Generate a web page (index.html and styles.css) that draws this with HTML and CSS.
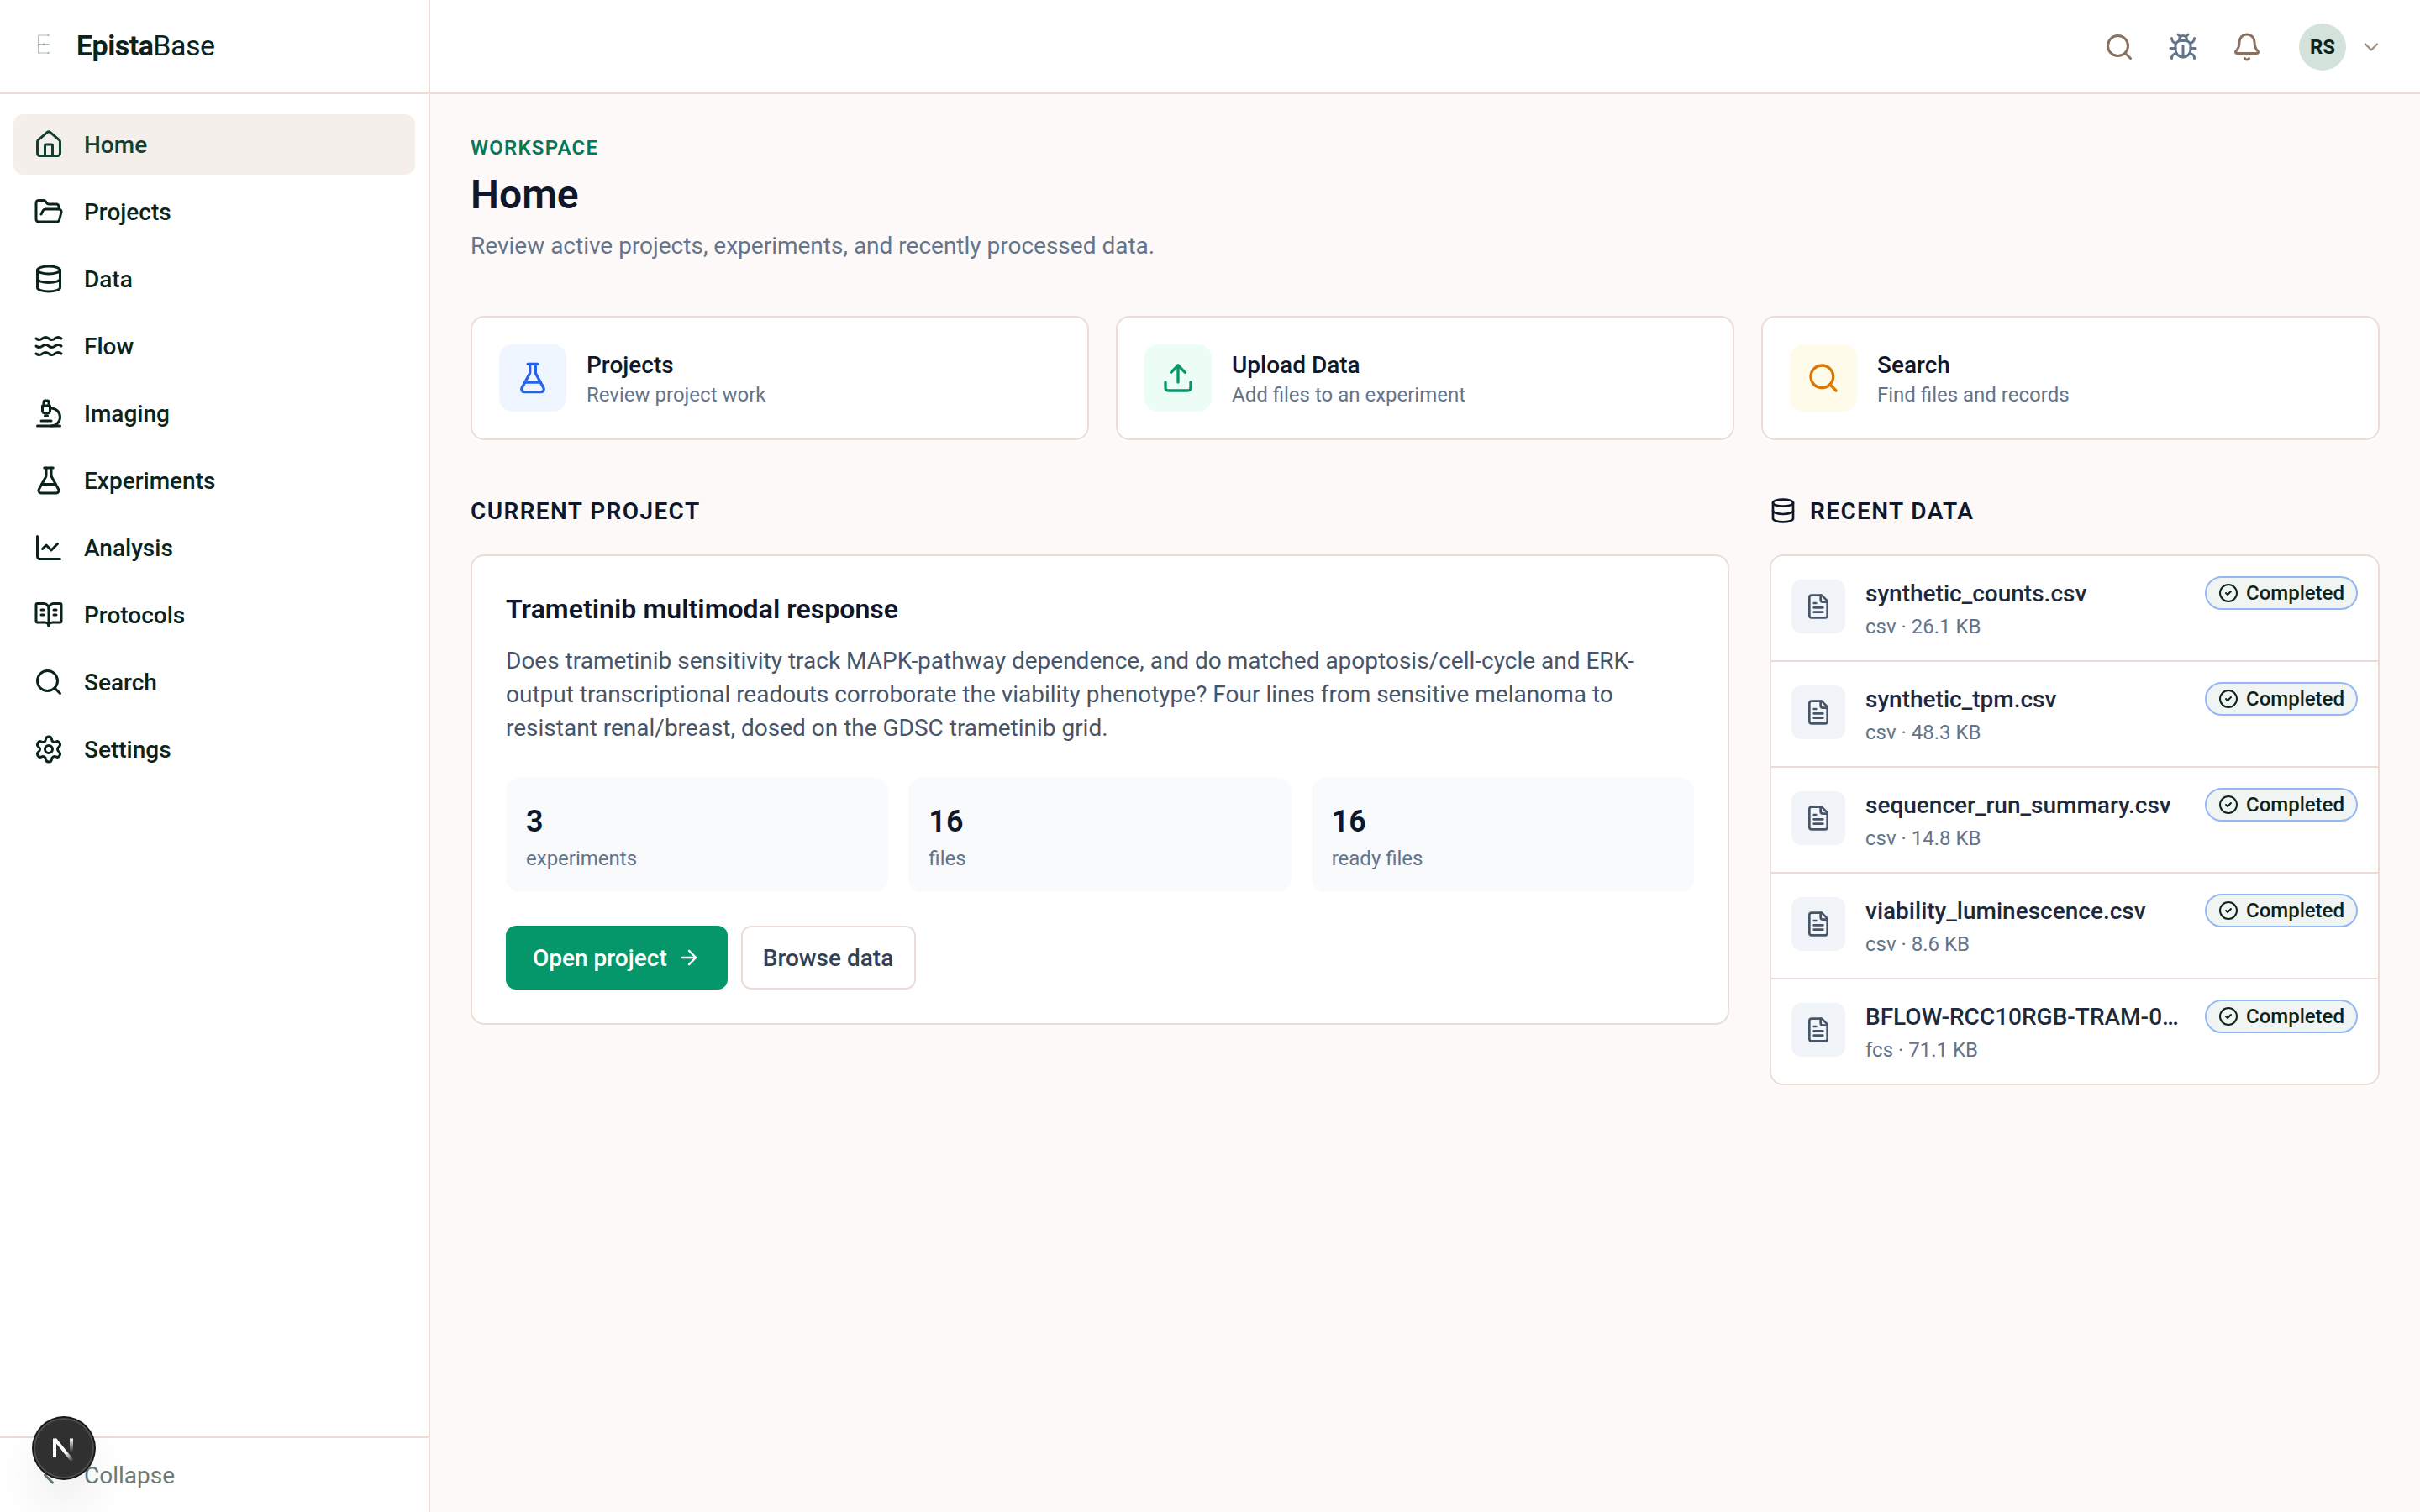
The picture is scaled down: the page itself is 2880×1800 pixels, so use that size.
FILE: index.html
```
<!DOCTYPE html>
<html lang="en">
<head>
    <meta charset="UTF-8">
    <meta name="viewport" content="width=device-width, initial-scale=1.0">
    <title>EpistaBase</title>
    <link rel="stylesheet" href="styles.css">
</head>
<body>

    <!-- shared icons -->
    <svg class="sprite" xmlns="http://www.w3.org/2000/svg">
        <symbol id="i-home" viewBox="0 0 24 24"><path d="M15 21v-8a1 1 0 0 0-1-1h-4a1 1 0 0 0-1 1v8"/><path d="M3 10a2 2 0 0 1 .709-1.528l7-5.999a2 2 0 0 1 2.582 0l7 5.999A2 2 0 0 1 21 10v9a2 2 0 0 1-2 2H5a2 2 0 0 1-2-2z"/></symbol>
        <symbol id="i-folder" viewBox="0 0 24 24"><path d="m6 14 1.5-2.9A2 2 0 0 1 9.24 10H20a2 2 0 0 1 1.94 2.5l-1.54 6a2 2 0 0 1-1.95 1.5H4a2 2 0 0 1-2-2V5a2 2 0 0 1 2-2h3.9a2 2 0 0 1 1.69.9l.81 1.2a2 2 0 0 0 1.67.9H18a2 2 0 0 1 2 2v2"/></symbol>
        <symbol id="i-database" viewBox="0 0 24 24"><ellipse cx="12" cy="5" rx="9" ry="3"/><path d="M3 5v14a9 3 0 0 0 18 0V5"/><path d="M3 12a9 3 0 0 0 18 0"/></symbol>
        <symbol id="i-waves" viewBox="0 0 24 24"><path d="M2 6c.6.5 1.2 1 2.5 1C7 7 7 5 9.5 5c2.6 0 2.4 2 5 2 2.5 0 2.5-2 5-2 1.3 0 1.9.5 2.5 1"/><path d="M2 12c.6.5 1.2 1 2.5 1 2.5 0 2.5-2 5-2 2.6 0 2.4 2 5 2 2.5 0 2.5-2 5-2 1.3 0 1.9.5 2.5 1"/><path d="M2 18c.6.5 1.2 1 2.5 1 2.5 0 2.5-2 5-2 2.6 0 2.4 2 5 2 2.5 0 2.5-2 5-2 1.3 0 1.9.5 2.5 1"/></symbol>
        <symbol id="i-microscope" viewBox="0 0 24 24"><path d="M6 18h8"/><path d="M3 22h18"/><path d="M14 22a7 7 0 1 0 0-14h-1"/><path d="M9 14h2"/><path d="M9 12a2 2 0 0 1-2-2V6h6v4a2 2 0 0 1-2 2Z"/><path d="M12 6V3a1 1 0 0 0-1-1H9a1 1 0 0 0-1 1v3"/></symbol>
        <symbol id="i-flask" viewBox="0 0 24 24"><path d="M14 2v6a2 2 0 0 0 .245.96l5.51 10.08A2 2 0 0 1 18 22H6a2 2 0 0 1-1.755-2.96l5.51-10.08A2 2 0 0 0 10 8V2"/><path d="M6.453 15h11.094"/><path d="M8.5 2h7"/></symbol>
        <symbol id="i-chart" viewBox="0 0 24 24"><path d="M3 3v16a2 2 0 0 0 2 2h16"/><path d="m19 9-5 5-4-4-3 3"/></symbol>
        <symbol id="i-book" viewBox="0 0 24 24"><path d="M12 7v14"/><path d="M16 12h2"/><path d="M16 8h2"/><path d="M3 18a1 1 0 0 1-1-1V4a1 1 0 0 1 1-1h5a4 4 0 0 1 4 4 4 4 0 0 1 4-4h5a1 1 0 0 1 1 1v13a1 1 0 0 1-1 1h-6a3 3 0 0 0-3 3 3 3 0 0 0-3-3z"/><path d="M6 12h2"/><path d="M6 8h2"/></symbol>
        <symbol id="i-search" viewBox="0 0 24 24"><circle cx="11" cy="11" r="8"/><path d="m21 21-4.34-4.34"/></symbol>
        <symbol id="i-settings" viewBox="0 0 24 24"><path d="M9.671 4.136a2.34 2.34 0 0 1 4.659 0 2.34 2.34 0 0 0 3.319 1.915 2.34 2.34 0 0 1 2.33 4.033 2.34 2.34 0 0 0 0 3.831 2.34 2.34 0 0 1-2.33 4.033 2.34 2.34 0 0 0-3.319 1.915 2.34 2.34 0 0 1-4.659 0 2.34 2.34 0 0 0-3.32-1.915 2.34 2.34 0 0 1-2.33-4.033 2.34 2.34 0 0 0 0-3.831A2.34 2.34 0 0 1 6.35 6.051a2.34 2.34 0 0 0 3.319-1.915"/><circle cx="12" cy="12" r="3"/></symbol>
        <symbol id="i-bug" viewBox="0 0 24 24"><path d="M12 20v-9"/><path d="M14 7a4 4 0 0 1 4 4v3a6 6 0 0 1-12 0v-3a4 4 0 0 1 4-4z"/><path d="M14.12 3.88 16 2"/><path d="M21 21a4 4 0 0 0-3.81-4"/><path d="M21 5a4 4 0 0 1-3.55 3.97"/><path d="M22 13h-4"/><path d="M3 21a4 4 0 0 1 3.81-4"/><path d="M3 5a4 4 0 0 0 3.55 3.97"/><path d="M6 13H2"/><path d="m8 2 1.88 1.88"/><path d="M9 7.13V6a3 3 0 1 1 6 0v1.13"/></symbol>
        <symbol id="i-bell" viewBox="0 0 24 24"><path d="M10.268 21a2 2 0 0 0 3.464 0"/><path d="M3.262 15.326A1 1 0 0 0 4 17h16a1 1 0 0 0 .74-1.673C19.41 13.956 18 12.499 18 8A6 6 0 0 0 6 8c0 4.499-1.411 5.956-2.738 7.326"/></symbol>
        <symbol id="i-down" viewBox="0 0 24 24"><path d="m6 9 6 6 6-6"/></symbol>
        <symbol id="i-left" viewBox="0 0 24 24"><path d="m15 18-6-6 6-6"/></symbol>
        <symbol id="i-upload" viewBox="0 0 24 24"><path d="M12 3v12"/><path d="m17 8-5-5-5 5"/><path d="M21 15v4a2 2 0 0 1-2 2H5a2 2 0 0 1-2-2v-4"/></symbol>
        <symbol id="i-arrow" viewBox="0 0 24 24"><path d="M5 12h14"/><path d="m12 5 7 7-7 7"/></symbol>
        <symbol id="i-file" viewBox="0 0 24 24"><path d="M15 2H6a2 2 0 0 0-2 2v16a2 2 0 0 0 2 2h12a2 2 0 0 0 2-2V7Z"/><path d="M14 2v4a2 2 0 0 0 2 2h4"/><path d="M10 9H8"/><path d="M16 13H8"/><path d="M16 17H8"/></symbol>
        <symbol id="i-check" viewBox="0 0 24 24"><circle cx="12" cy="12" r="10"/><path d="m9 12 2 2 4-4"/></symbol>
    </svg>

    <div class="app">
        <aside class="sidebar">
            <div class="brand">
                <svg class="brand-mark" viewBox="0 0 36 36">
                    <path d="M18 5H5.500V26H18M5.500 15.500H18.500"/>
                    <circle cx="17.500" cy="5" r="0.700"/>
                    <circle cx="12" cy="15.500" r="0.800"/>
                    <circle cx="17.500" cy="26" r="0.700"/>
                </svg>
                <span class="brand-name"><b>Epista</b>Base</span>
            </div>
            <nav class="nav">
                <a class="nav-item active"><svg class="icon"><use href="#i-home"/></svg><span>Home</span></a>
                <a class="nav-item"><svg class="icon"><use href="#i-folder"/></svg><span>Projects</span></a>
                <a class="nav-item"><svg class="icon"><use href="#i-database"/></svg><span>Data</span></a>
                <a class="nav-item"><svg class="icon"><use href="#i-waves"/></svg><span>Flow</span></a>
                <a class="nav-item"><svg class="icon"><use href="#i-microscope"/></svg><span>Imaging</span></a>
                <a class="nav-item"><svg class="icon"><use href="#i-flask"/></svg><span>Experiments</span></a>
                <a class="nav-item"><svg class="icon"><use href="#i-chart"/></svg><span>Analysis</span></a>
                <a class="nav-item"><svg class="icon"><use href="#i-book"/></svg><span>Protocols</span></a>
                <a class="nav-item"><svg class="icon"><use href="#i-search"/></svg><span>Search</span></a>
                <a class="nav-item"><svg class="icon"><use href="#i-settings"/></svg><span>Settings</span></a>
            </nav>
            <div class="collapse"><svg class="icon"><use href="#i-left"/></svg><span>Collapse</span></div>
        </aside>

        <div class="page">
            <header class="topbar">
                <div class="tools">
                    <svg class="icon"><use href="#i-search"/></svg>
                    <svg class="icon tool-bug"><use href="#i-bug"/></svg>
                    <svg class="icon"><use href="#i-bell"/></svg>
                </div>
                <div class="user">
                    <span class="avatar">RS</span>
                    <svg class="icon user-caret"><use href="#i-down"/></svg>
                </div>
            </header>

            <main class="content">
                <div class="page-head">
                    <p class="eyebrow">WORKSPACE</p>
                    <h1>Home</h1>
                    <p class="lead">Review active projects, experiments, and recently processed data.</p>
                </div>

                <div class="actions">
                    <a class="card action">
                        <span class="action-icon blue"><svg class="icon"><use href="#i-flask"/></svg></span>
                        <span class="action-text"><strong>Projects</strong><small>Review project work</small></span>
                    </a>
                    <a class="card action">
                        <span class="action-icon green"><svg class="icon"><use href="#i-upload"/></svg></span>
                        <span class="action-text"><strong>Upload Data</strong><small>Add files to an experiment</small></span>
                    </a>
                    <a class="card action">
                        <span class="action-icon amber"><svg class="icon"><use href="#i-search"/></svg></span>
                        <span class="action-text"><strong>Search</strong><small>Find files and records</small></span>
                    </a>
                </div>

                <div class="columns">
                    <section>
                        <h2 class="section-title"><span>CURRENT PROJECT</span></h2>
                        <div class="card project">
                            <h3>Trametinib multimodal response</h3>
                            <p class="project-desc">Does trametinib sensitivity track MAPK-pathway dependence, and do matched apoptosis/cell-cycle and ERK-output transcriptional readouts corroborate the viability phenotype? Four lines from sensitive melanoma to resistant renal/breast, dosed on the GDSC trametinib grid.</p>
                            <div class="stats">
                                <div class="stat"><strong>3</strong><span>experiments</span></div>
                                <div class="stat"><strong>16</strong><span>files</span></div>
                                <div class="stat"><strong>16</strong><span>ready files</span></div>
                            </div>
                            <div class="buttons">
                                <a class="btn btn-primary"><span>Open project</span><svg class="icon"><use href="#i-arrow"/></svg></a>
                                <a class="btn btn-outline"><span>Browse data</span></a>
                            </div>
                        </div>
                    </section>

                    <section>
                        <h2 class="section-title"><svg class="icon"><use href="#i-database"/></svg><span>RECENT DATA</span></h2>
                        <div class="card files">
                            <div class="file">
                                <span class="file-icon"><svg class="icon"><use href="#i-file"/></svg></span>
                                <div class="file-info"><p class="file-name">synthetic_counts.csv</p><p class="file-meta">csv · 26.1 KB</p></div>
                                <span class="badge"><svg class="icon"><use href="#i-check"/></svg>Completed</span>
                            </div>
                            <div class="file">
                                <span class="file-icon"><svg class="icon"><use href="#i-file"/></svg></span>
                                <div class="file-info"><p class="file-name">synthetic_tpm.csv</p><p class="file-meta">csv · 48.3 KB</p></div>
                                <span class="badge"><svg class="icon"><use href="#i-check"/></svg>Completed</span>
                            </div>
                            <div class="file">
                                <span class="file-icon"><svg class="icon"><use href="#i-file"/></svg></span>
                                <div class="file-info"><p class="file-name">sequencer_run_summary.csv</p><p class="file-meta">csv · 14.8 KB</p></div>
                                <span class="badge"><svg class="icon"><use href="#i-check"/></svg>Completed</span>
                            </div>
                            <div class="file">
                                <span class="file-icon"><svg class="icon"><use href="#i-file"/></svg></span>
                                <div class="file-info"><p class="file-name">viability_luminescence.csv</p><p class="file-meta">csv · 8.6 KB</p></div>
                                <span class="badge"><svg class="icon"><use href="#i-check"/></svg>Completed</span>
                            </div>
                            <div class="file">
                                <span class="file-icon"><svg class="icon"><use href="#i-file"/></svg></span>
                                <div class="file-info"><p class="file-name">BFLOW-RCC10RGB-TRAM-0…</p><p class="file-meta">fcs · 71.1 KB</p></div>
                                <span class="badge"><svg class="icon"><use href="#i-check"/></svg>Completed</span>
                            </div>
                        </div>
                    </section>
                </div>
            </main>
        </div>
    </div>

    <!-- dev tools button -->
    <div class="dev-badge">
        <svg viewBox="0 0 40 40">
            <defs>
                <linearGradient id="fade-a" gradientUnits="userSpaceOnUse" x1="23" y1="25" x2="31" y2="35"><stop offset="0" stop-color="#fff"/><stop offset="1" stop-color="#fff" stop-opacity="0"/></linearGradient>
                <linearGradient id="fade-b" x1="0" y1="0" x2="0" y2="1"><stop offset="0" stop-color="#fff"/><stop offset="1" stop-color="#fff" stop-opacity="0"/></linearGradient>
            </defs>
            <path d="M9 31V8.500" stroke="#fff" stroke-width="4"/>
            <path d="M9.500 9.500 30.500 35.500" stroke="url(#fade-a)" stroke-width="4"/>
            <rect x="27" y="8.500" width="4" height="16" fill="url(#fade-b)"/>
        </svg>
    </div>

</body>
</html>
```
FILE: styles.css
```
* {
    box-sizing: border-box;
}
body {
    margin: 0;
    font-family: Roboto, "Liberation Sans", sans-serif;
    font-size: 28px;
    line-height: 40px;
    color: #0f172a;
    background: #fdf9f8;
}
h1, h2, h3, p {
    margin: 0;
}
.sprite {
    display: none;
}
.icon {
    width: 36px;
    height: 36px;
    flex-shrink: 0;
    fill: none;
    stroke: currentColor;
    stroke-width: 2;
    stroke-linecap: round;
    stroke-linejoin: round;
}
.app {
    display: flex;
    height: 100vh;
}

/* sidebar */
.sidebar {
    width: 512px;
    flex-shrink: 0;
    display: flex;
    flex-direction: column;
    background: #fff;
    border-right: 2px solid #eaddd7;
    color: #0a241b;
}
.brand {
    height: 112px;
    display: flex;
    align-items: center;
    gap: 15px;
    padding-left: 40px;
    border-bottom: 2px solid #eaddd7;
}
.brand-mark {
    width: 36px;
    height: 36px;
    fill: #5f7d72;
    stroke: #a3b7af;
    stroke-width: 0.9;
}
.brand-mark path {
    fill: none;
}
.brand-name {
    padding-bottom: 2px;
    font-size: 34px;
    letter-spacing: -0.015em;
}
.brand-name b {
    font-weight: 700;
}
.nav {
    flex: 1;
    display: flex;
    flex-direction: column;
    gap: 8px;
    padding: 24px 16px;
}
.nav-item {
    height: 72px;
    display: flex;
    align-items: center;
    gap: 24px;
    padding: 0 24px;
    border-radius: 12px;
    font-weight: 500;
}
.nav-item span, .collapse span, .btn span {
    padding-top: 2px;
}
.nav-item.active {
    background: #f4efeb;
    color: #123f2f;
}
.collapse {
    height: 90px;
    display: flex;
    align-items: center;
    gap: 24px;
    padding-left: 40px;
    border-top: 2px solid #eaddd7;
    color: #6b7c76;
}

/* top bar */
.page {
    flex: 1;
    min-width: 0;
}
.topbar {
    height: 112px;
    display: flex;
    align-items: center;
    justify-content: flex-end;
    gap: 44px;
    padding: 2px 44px 0 0;
    background: #fff;
    border-bottom: 2px solid #eaddd7;
    color: #8b7060;
}
.tools {
    display: flex;
    gap: 40px;
}
.tool-bug {
    color: #64748b;
}
.user {
    display: flex;
    align-items: center;
    gap: 16px;
}
.avatar {
    width: 56px;
    height: 56px;
    border-radius: 50%;
    background: #d3e2db;
    color: #0a241b;
    font-size: 24px;
    font-weight: 700;
    line-height: 56px;
    text-align: center;
}
.user-caret {
    width: 28px;
    height: 28px;
    opacity: 0.8;
}

/* content */
.content {
    padding: 48px;
}
.eyebrow {
    font-size: 24px;
    line-height: 32px;
    font-weight: 600;
    letter-spacing: 0.05em;
    color: #047857;
}
h1 {
    margin: 8px 0;
    font-size: 48px;
    line-height: 64px;
    font-weight: 600;
}
.lead {
    padding-top: 1px;
    color: #64748b;
}
.card {
    background: #fff;
    border: 2px solid #eaddd7;
    border-radius: 16px;
    box-shadow: 0 2px 6px rgba(255, 255, 255, 0.7);
}
.actions {
    display: grid;
    grid-template-columns: repeat(3, 1fr);
    gap: 32px;
    margin: 63px 0 64px;
}
.action {
    display: flex;
    align-items: center;
    gap: 24px;
    padding: 32px;
}
.action-icon {
    width: 80px;
    height: 80px;
    display: grid;
    place-items: center;
    border-radius: 16px;
}
.action-icon .icon {
    width: 40px;
    height: 40px;
}
.blue {
    background: #eff6ff;
    color: #2563eb;
}
.green {
    background: #ecfdf5;
    color: #059669;
}
.amber {
    background: #fffbeb;
    color: #d97706;
}
.action-text {
    display: flex;
    flex-direction: column;
}
.action-text strong {
    padding-top: 1px;
    margin-bottom: -1px;
    font-weight: 500;
}
.action-text small {
    font-size: 24px;
    line-height: 32px;
    color: #64748b;
}
.columns {
    display: grid;
    grid-template-columns: 1498fr 726fr;
    gap: 48px;
    align-items: start;
}
.section-title {
    height: 40px;
    display: flex;
    align-items: center;
    gap: 16px;
    margin-bottom: 32px;
    font-size: 28px;
    font-weight: 600;
    letter-spacing: 0.05em;
}
.section-title span {
    padding-top: 2px;
}
.section-title .icon {
    width: 32px;
    height: 32px;
}

/* current project */
.project {
    padding: 39px 40px 40px;
}
.project h3 {
    font-size: 32px;
    line-height: 48px;
    font-weight: 600;
    letter-spacing: 0.04px;
}
.project-desc {
    margin: 18px 0 39px;
    color: #475569;
}
.stats {
    display: grid;
    grid-template-columns: repeat(3, 1fr);
    gap: 24px;
}
.stat {
    display: flex;
    flex-direction: column;
    padding: 24px;
    border-radius: 16px;
    background: #f8fafc;
}
.stat strong {
    font-size: 36px;
    line-height: 56px;
    font-weight: 600;
}
.stat span {
    font-size: 24px;
    line-height: 32px;
    color: #64748b;
}
.buttons {
    display: flex;
    gap: 16px;
    margin-top: 40px;
}
.btn {
    height: 76px;
    display: flex;
    align-items: center;
    gap: 12px;
    border-radius: 12px;
    font-weight: 500;
}
.btn .icon {
    width: 28px;
    height: 28px;
}
.btn-primary {
    padding: 0 32px;
    background: #059669;
    color: #fff;
}
.btn-outline {
    min-width: 208px;
    padding: 0 24px;
    border: 2px solid #eaddd7;
    color: #334155;
}

/* recent data */
.file {
    display: flex;
    align-items: flex-start;
    gap: 24px;
    padding: 24px;
}
.file + .file {
    border-top: 2px solid #eaddd7;
}
.file-icon {
    width: 64px;
    height: 64px;
    margin-top: 4px;
    display: grid;
    place-items: center;
    border-radius: 12px;
    background: #f1f5f9;
    color: #475569;
}
.file-icon .icon {
    width: 32px;
    height: 32px;
}
.file-info {
    flex: 1;
    min-width: 0;
}
.file-name {
    padding-top: 1px;
    overflow: hidden;
    white-space: nowrap;
    text-overflow: ellipsis;
    font-weight: 500;
    color: #1e293b;
}
.file-meta {
    margin-top: 3px;
    font-size: 24px;
    line-height: 32px;
    color: #64748b;
}
.badge {
    height: 40px;
    display: flex;
    align-items: center;
    gap: 9px;
    padding: 0 14px;
    border: 2px solid #93b8f5;
    border-radius: 20px;
    background: #f0f4f2;
    color: #0a241b;
    font-size: 24px;
    font-weight: 500;
}
.badge .icon {
    width: 24px;
    height: 24px;
}

/* floats over the sidebar corner */
.dev-badge {
    position: fixed;
    left: 40px;
    bottom: 40px;
    width: 72px;
    height: 72px;
    display: grid;
    place-items: center;
    border-radius: 50%;
    background: #303030;
    box-shadow: 0 0 0 2px #171717, inset 0 0 0 2px rgba(255, 255, 255, 0.14), 0 32px 64px -16px rgba(0, 0, 0, 0.24);
}
.dev-badge svg {
    width: 40px;
    height: 40px;
    fill: none;
}
```
